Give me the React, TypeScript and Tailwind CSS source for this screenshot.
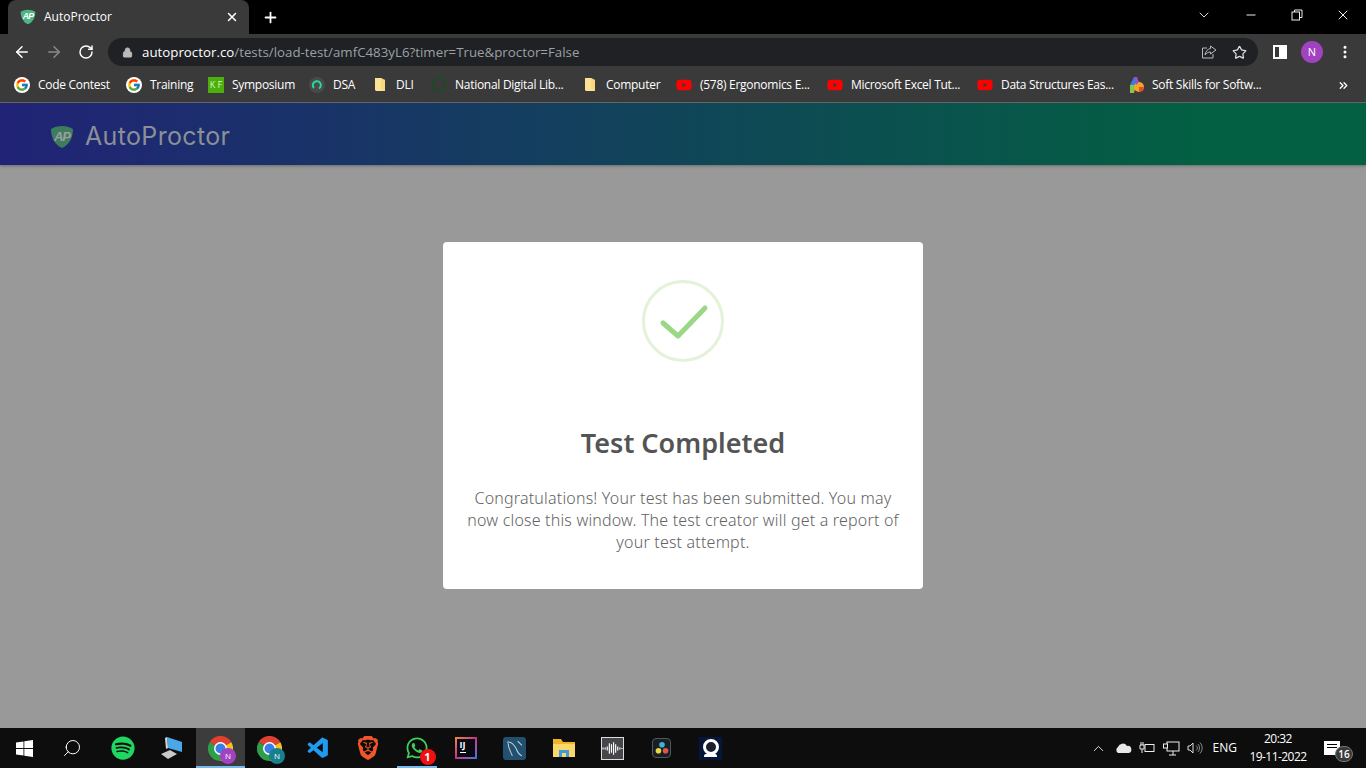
import { FcGoogle } from 'react-icons/fc'
import { FaSpotify, FaWhatsapp, FaYoutube } from 'react-icons/fa'
import { VscVscode } from 'react-icons/vsc'
import { SiBrave } from 'react-icons/si'
import { ArrowLeft, ArrowRight, RotateCw, Lock, Star, MoreVertical, X, Plus, ChevronDown, Minus, ChevronsRight, ChevronUp, Search } from 'lucide-react'
import type { ReactNode } from 'react'

function Shield({ size, fill, letter }: { size: number; fill: string; letter: string }) {
  return (
    <svg width={size} height={size} viewBox="0 0 24 24" className="shrink-0">
      <path d="M12 1 C16 1 20 2 23 4 C23 13 19 20 12 23 C5 20 1 13 1 4 C4 2 8 1 12 1Z" fill={fill} />
      <text x="12" y="15.5" textAnchor="middle" fontSize="13" fontWeight="700" fontStyle="italic" letterSpacing="-1" fontFamily="'Liberation Sans', sans-serif" fill={letter}>AP</text>
    </svg>
  )
}

function ChromeIcon({ size, badge, badgeColor }: { size: number; badge: string; badgeColor: string }) {
  return (
    <div className="relative" style={{ width: size, height: size }}>
      <svg width={size} height={size} viewBox="2 2 20 20">
        <path d="M12 12 L3.3 7 A10 10 0 0 1 20.7 7Z" fill="#e0402f" />
        <path d="M12 12 L20.7 7 A10 10 0 0 1 12 22Z" fill="#f6c025" />
        <path d="M12 12 L12 22 A10 10 0 0 1 3.3 7Z" fill="#2f9e4a" />
        <circle cx="12" cy="12" r="5.2" fill="#fff" />
        <circle cx="12" cy="12" r="4" fill="#3b7fe6" />
      </svg>
      <div className={`absolute -right-[3px] -bottom-[3px] w-[16px] h-[16px] rounded-full flex items-center justify-center text-[8px] text-white ${badgeColor}`}>{badge}</div>
    </div>
  )
}

function Folder() {
  return (
    <svg width="16" height="16" viewBox="0 0 16 16">
      <path d="M3 1 H9 V14 H4 L3 13Z" fill="#fde293" />
      <path d="M9 1 L13 3 V14 H9Z" fill="#fde293" />
      <path d="M9 1 V12 L13 14 V3Z" fill="#f2cd6b" opacity="0.5" />
    </svg>
  )
}

const YT = <FaYoutube size={16} color="#ff0000" />

const bookmarks: { label: string; icon: ReactNode; w: string }[] = [
  { label: 'Code Contest', w: 'w-[112px]', icon: <span className="w-4 h-4 rounded-full bg-white flex items-center justify-center"><FcGoogle size={14} /></span> },
  { label: 'Training', w: 'w-[82px]', icon: <span className="w-4 h-4 rounded-full bg-white flex items-center justify-center"><FcGoogle size={14} /></span> },
  { label: 'Symposium', w: 'w-[101px]', icon: <span className="w-4 h-4 bg-[#4caf0c] text-[#d8f5c0] text-[9px] tracking-[0px] flex items-center justify-center whitespace-nowrap">K F</span> },
  {
    label: 'DSA', w: 'w-[63px]', icon: (
      <svg width="16" height="16" viewBox="0 0 16 16">
        <circle cx="8" cy="8" r="8" fill="#4a4a4a" />
        <path d="M5 11 A4 4 0 1 1 10 11.5" fill="none" stroke="#2ad8a0" strokeWidth="2" />
      </svg>
    ),
  },
  { label: 'DLI', w: 'w-[59px]', icon: <Folder /> },
  {
    label: 'National Digital Lib...', w: 'w-[151px]', icon: (
      <svg width="16" height="16" viewBox="0 0 16 16">
        <circle cx="8" cy="8" r="6.5" fill="none" stroke="#1f4a26" strokeWidth="2" />
      </svg>
    ),
  },
  { label: 'Computer', w: 'w-[94px]', icon: <Folder /> },
  { label: '(578) Ergonomics E...', w: 'w-[151px]', icon: YT },
  { label: 'Microsoft Excel Tut...', w: 'w-[150px]', icon: YT },
  { label: 'Data Structures Eas...', w: 'w-[151px]', icon: YT },
  {
    label: 'Soft Skills for Softw...', w: 'w-[150px]', icon: (
      <svg width="16" height="18" viewBox="0 0 16 18">
        <path d="M2 9 L6 1 H9 L8 9Z" fill="#2f7fe6" />
        <path d="M2 9 H8 L6 17 H2Z" fill="#8bc34a" />
        <circle cx="11" cy="11" r="5" fill="#f6a623" />
        <path d="M11 11 L16 11 A5 5 0 0 1 11 16Z" fill="#e94b35" />
        <path d="M6 1 H9 L11 6 L8 9Z" fill="#9b4fd0" />
      </svg>
    ),
  },
]

function Tab() {
  return (
    <div className="relative w-[241px] ml-[8px] h-[34px] bg-[#3a3a3a] rounded-t-[8px] flex items-center pl-[12px] pr-[10px]">
      <Shield size={16} fill="#4fb584" letter="#fff" />
      <span className="ml-[8px] text-[12px] text-white flex-1">AutoProctor</span>
      <X size={14} strokeWidth={2.5} color="#fff" />
    </div>
  )
}

function TaskIcon({ children, active, underline }: { children: ReactNode; active?: boolean; underline?: boolean }) {
  return (
    <div className={`relative w-[49px] h-full flex items-center justify-center ${active ? 'bg-[#3c3c3c]' : ''}`}>
      {children}
      {active && <div className="absolute left-0 right-0 bottom-0 h-[2px] bg-[#76b9ed]" />}
      {underline && <div className="absolute left-[5px] right-[4px] bottom-0 h-[2px] bg-[#76b9ed]" />}
    </div>
  )
}

export default function App() {
  return (
    <div className="w-[1366px] h-[768px] flex flex-col overflow-hidden bg-[#999999] font-['Open_Sans','Noto_Sans',sans-serif]">
      {/* title bar */}
      <div className="h-[34px] bg-black flex items-center shrink-0">
        <Tab />
        <Plus size={17} strokeWidth={2.5} color="#fff" className="ml-[13px]" />
        <div className="flex-1" />
        <div className="flex items-center h-full text-[#eee] pb-[4px]">
          <ChevronDown size={16} strokeWidth={1.4} className="mr-[32px]" />
          <Minus size={14} strokeWidth={1.7} className="mr-[33px]" />
          <svg width="12" height="12" viewBox="0 0 12 12" fill="none" stroke="#eee" className="mr-[32px]">
            <rect x="1" y="3" width="7.5" height="8" />
            <path d="M3.5 3 V1 H11 V8.5 H8.5" />
          </svg>
          <X size={16} strokeWidth={1.5} className="mr-[15px]" />
        </div>
      </div>

      {/* toolbar */}
      <div className="h-[36px] bg-[#3a3a3a] flex items-center shrink-0">
        <ArrowLeft size={18} color="#fff" strokeWidth={2} className="ml-[13px]" />
        <ArrowRight size={18} color="#8a8a8a" strokeWidth={2} className="ml-[14px]" />
        <RotateCw size={16} color="#fff" strokeWidth={2.2} className="ml-[15px]" />
        <div className="ml-[14px] w-[1150px] h-[28px] rounded-full bg-[#202124] flex items-center pl-[14px] pr-[11px]">
          <Lock size={11} fill="#bbb" color="#bbb" />
          <span className="ml-[9px] pt-[1px] text-[13.3px] text-white">autoproctor.co</span>
          <span className="pt-[1px] text-[13.3px] text-[#9aa0a6]">/tests/load-test/amfC483yL6?timer=True&amp;proctor=False</span>
          <div className="flex-1" />
          <svg width="16" height="16" viewBox="0 0 16 16" fill="none" stroke="#bbb" strokeWidth="1" className="mr-[15px]">
            <path d="M6 4 H1.5 V14 H12 V10" />
            <path d="M9.5 2 L15 6 L9.5 10 V8 C7 8 5.5 9 4 11 C4.5 7.5 6.5 5 9.5 4.5Z" />
          </svg>
          <Star size={15} color="#ddd" strokeWidth={2} />
        </div>
        <div className="ml-[15px] w-[14px] h-[14px] border-[2px] border-white flex justify-end">
          <div className="w-[6px] h-full bg-white" />
        </div>
        <div className="ml-[14px] w-[22px] h-[22px] rounded-full bg-[#a142c0] flex items-center justify-center text-[11px] text-white">N</div>
        <MoreVertical size={16} color="#fff" strokeWidth={2.5} className="ml-[14px]" />
      </div>

      {/* bookmarks */}
      <div className="h-[33px] bg-[#3a3a3a] border-b border-[#6b6b6b] flex items-center pl-[14px] pb-[2px] shrink-0">
        {bookmarks.map(b => (
          <div key={b.label} className={`${b.w} flex items-center shrink-0`}>
            <span className="w-4 h-4 flex items-center justify-center shrink-0">{b.icon}</span>
            <span className="ml-[8px] text-[12px] tracking-[-0.28px] text-white whitespace-nowrap">{b.label}</span>
          </div>
        ))}
        <ChevronsRight size={13} color="#fff" strokeWidth={2.5} className="ml-[59px]" />
      </div>

      {/* app header */}
      <div className="h-[62px] shrink-0 bg-[linear-gradient(90deg,#212376,#036042_88%)] flex items-center pl-[50px] pt-[6px] shadow-[0_1px_3px_rgba(0,0,0,0.3)]">
        <Shield size={24} fill="#3d7c5c" letter="#9aa0a0" />
        <span className="ml-[11px] text-[25px] text-[#8b8f98] font-['Inter',sans-serif] tracking-[0.35px]">AutoProctor</span>
      </div>

      {/* overlay body */}
      <div className="flex-1 flex justify-center pt-[77px]">
        <div className="w-[480px] h-[347px] bg-white rounded-[4px] flex flex-col items-center px-[22px] pt-[38px]">
          <svg width="82" height="82" viewBox="0 0 82 82" fill="none">
            <circle cx="41" cy="41" r="39.5" stroke="#e4f2d9" strokeWidth="3" />
            <path d="M21 43 L36 56 L63 28" stroke="#9ad886" strokeWidth="5" strokeLinecap="round" strokeLinejoin="round" />
          </svg>
          <h1 className="mt-[63px] text-[27px] leading-[36px] font-semibold text-[#545454] font-['Noto_Sans',sans-serif]">Test Completed</h1>
          <p className="mt-[26px] text-[16px] leading-[22px] tracking-[0.19px] font-light text-[#636363] text-center font-['Noto_Sans',sans-serif]">
            Congratulations! Your test has been submitted. You may now close this window. The test creator will get a report of your test attempt.
          </p>
        </div>
      </div>

      {/* taskbar */}
      <div className="h-[40px] bg-[#0d0d0d] flex items-center shrink-0 text-white">
        <div className="w-[48px] h-full flex items-center justify-center">
          <svg width="17" height="17" viewBox="0 0 17 17" fill="#fff">
            <path d="M0 2.5 L7.5 1.4 V8 H0Z" />
            <path d="M8.3 1.3 L17 0 V8 H8.3Z" />
            <path d="M0 9 H7.5 V15.6 L0 14.5Z" />
            <path d="M8.3 9 H17 V17 L8.3 15.7Z" />
          </svg>
        </div>
        <div className="w-[50px] h-full flex items-center justify-center pr-[3px]">
          <Search size={20} strokeWidth={1.2} className="-scale-x-100" />
        </div>
        <TaskIcon><FaSpotify size={24} color="#1ed760" /></TaskIcon>
        <TaskIcon>
          <svg width="24" height="24" viewBox="0 0 24 24">
            <path d="M7 1 L22 6 V16 L8 12Z" fill="#4aa8e8" />
            <path d="M7 1 L8 12 L6 13 L5 2Z" fill="#d8d8d8" />
            <path d="M1 18 L10 14 L17 18 L8 23Z" fill="#c9c9c9" />
          </svg>
        </TaskIcon>
        <TaskIcon active><ChromeIcon size={25} badge="N" badgeColor="bg-[#a142c0]" /></TaskIcon>
        <TaskIcon><ChromeIcon size={25} badge="N" badgeColor="bg-[#16808c]" /></TaskIcon>
        <TaskIcon><VscVscode size={25} color="#1f9cf0" /></TaskIcon>
        <TaskIcon><SiBrave size={24} color="#f1562b" /></TaskIcon>
        <TaskIcon underline>
          <div className="relative">
            <FaWhatsapp size={24} color="#3fd05c" />
            <div className="absolute -right-[7px] -bottom-[5px] w-[16px] h-[16px] rounded-full bg-[#f01010] text-[11px] font-bold flex items-center justify-center">1</div>
          </div>
        </TaskIcon>
        <TaskIcon>
          <div className="w-[22px] h-[22px] p-[2px] bg-gradient-to-br from-[#f0883a] via-[#c4307e] to-[#2a6fe0]">
            <div className="w-full h-full bg-[#0a0a14] flex flex-col pl-[3px] pt-[1px]">
              <span className="text-[9px] leading-[10px] font-bold text-white">IJ</span>
              <span className="w-[6px] h-[1px] bg-white mt-[2px]" />
            </div>
          </div>
        </TaskIcon>
        <TaskIcon>
          <div className="w-[23px] h-[23px] rounded-[3px] bg-[#22506f] flex items-center justify-center">
            <svg width="19" height="19" viewBox="0 0 18 18" fill="none" stroke="#c4d2dc" strokeWidth="1">
              <path d="M2 3 C6 2 9 6 11 10 C12 13 14 15 16 16 M3 4 C3 8 5 12 7 16 M12 2 L16 6" />
            </svg>
          </div>
        </TaskIcon>
        <TaskIcon>
          <svg width="24" height="22" viewBox="0 0 24 22">
            <path d="M1 2 H9 L11 5 H23 V20 H1Z" fill="#f0b429" />
            <path d="M1 7 H23 V20 H1Z" fill="#fbd76a" />
            <path d="M7 20 V13 H17 V20 H14 V16 H10 V20Z" fill="#3b9cdc" />
          </svg>
        </TaskIcon>
        <TaskIcon>
          <div className="w-[23px] h-[23px] border border-[#ddd] bg-[#45474a] flex items-center justify-center">
            <svg width="21" height="17" viewBox="0 0 20 14" stroke="#fff" strokeWidth="1.1">
              <path d="M1 6 V8 M3 6 V8 M5 5 V9 M7 2 V12 M9 3 V11 M11 1 V13 M13 3 V11 M15 5 V9 M17 6 V8 M19 6.5 V7.5" />
            </svg>
          </div>
        </TaskIcon>
        <TaskIcon>
          <div className="w-[19px] h-[20px] rounded-[4px] bg-[#1a1e24] border border-[#4b5a5a] flex items-center justify-center">
            <svg width="14" height="14" viewBox="0 0 15 15">
              <circle cx="7.5" cy="4" r="3" fill="#38b5d8" />
              <circle cx="3.7" cy="10.5" r="3" fill="#e6d93c" />
              <circle cx="11.3" cy="10.5" r="3" fill="#e0564c" />
            </svg>
          </div>
        </TaskIcon>
        <TaskIcon>
          <div className="w-[23px] h-[23px] bg-[#06163a] flex flex-col items-center justify-center">
            <div className="w-[16px] h-[16px] rounded-full border-[3px] border-white bg-[#1a2030]" />
            <div className="w-[13px] h-[3px] bg-white rounded-t-[2px] -mt-[1px]" />
          </div>
        </TaskIcon>
        <div className="flex-1" />

        {/* tray */}
        <ChevronUp size={17} strokeWidth={1.2} className="mr-[7px]" />
        <svg width="18" height="12" viewBox="0 0 18 12" fill="#e8e8e8" className="mr-[7px]">
          <path d="M4 11 A3.5 3.5 0 0 1 4 5 A5 5 0 0 1 13 4 A3.5 3.5 0 0 1 14.5 11Z" />
        </svg>
        <svg width="16" height="14" viewBox="0 0 16 14" fill="none" stroke="#eee" strokeWidth="1" className="mr-[8px]">
          <rect x="6" y="3.5" width="9" height="7" />
          <path d="M1 4 H5 V8 H1Z M2 4 V1 M4 4 V1 M3 8 V12" />
        </svg>
        <svg width="17" height="15" viewBox="0 0 17 15" fill="none" stroke="#eee" strokeWidth="1" className="mr-[7px]">
          <rect x="4" y="1" width="12" height="9" />
          <rect x="0.5" y="3" width="4" height="4" fill="#0d0d0d" />
          <path d="M10 10 V14 M6 14 H13" />
        </svg>
        <svg width="17" height="14" viewBox="0 0 17 14" fill="none" stroke="#ddd" strokeWidth="1" className="mr-[9px]">
          <path d="M1 5 H3 L6 2 V12 L3 9 H1Z" />
          <path d="M9 4.5 A3 3 0 0 1 9 9.5 M11 3 A6 6 0 0 1 11 11 M13 1.5 A8 8 0 0 1 13 12.5" stroke="#888" />
        </svg>
        <span className="text-[12px] mr-[8px]">ENG</span>
        <div className="w-[66px] flex flex-col items-center text-[12px] tracking-[-0.55px] leading-[18px] mr-[13px]">
          <span>20:32</span>
          <span className="whitespace-nowrap">19-11-2022</span>
        </div>
        <div className="relative mr-[26px] w-[16px] h-[14px] bg-white">
          <div className="absolute left-[3px] top-[3px] w-[10px] h-[1px] bg-black" />
          <div className="absolute left-[3px] top-[6px] w-[10px] h-[1px] bg-black" />
          <div className="absolute -right-[13px] top-[5px] w-[18px] h-[16px] rounded-full bg-[#3a3a3a] border border-[#777] text-[10px] font-semibold flex items-center justify-center">16</div>
        </div>
      </div>
    </div>
  )
}
